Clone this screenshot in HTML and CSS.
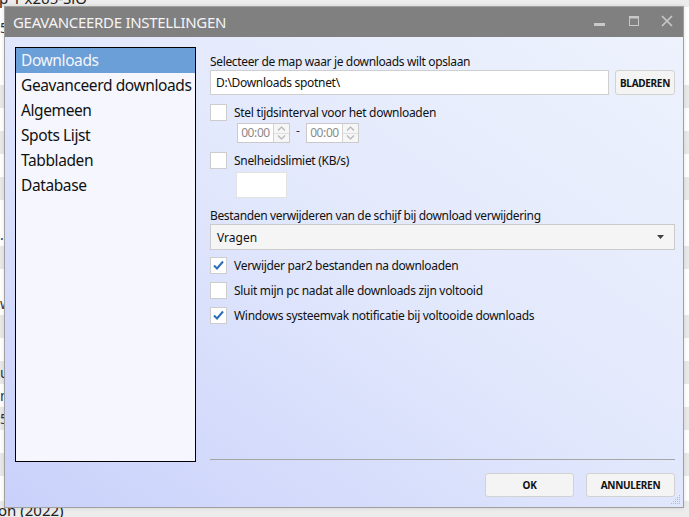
FILE: index.html
```html
<!DOCTYPE html>
<html lang="nl">
<head>
<meta charset="utf-8">
<title>Geavanceerde instellingen</title>
<link rel="stylesheet" href="styles.css">
</head>
<body>
<div class="desk">
  <div class="desk-top">p 1 x265-SiO</div>
  <div class="desk-rows">
    <div class="drow">5</div>
    <div class="drow"></div>
    <div class="drow"></div>
    <div class="drow alt"></div>
    <div class="drow"></div>
    <div class="drow alt"></div>
    <div class="drow"></div>
    <div class="drow alt"></div>
    <div class="drow"></div>
    <div class="drow">.</div>
    <div class="drow alt"></div>
    <div class="drow"></div>
    <div class="drow">w</div>
    <div class="drow alt"></div>
    <div class="drow"></div>
    <div class="drow alt">ul</div>
    <div class="drow">n</div>
    <div class="drow alt">5-</div>
    <div class="drow"></div>
    <div class="drow alt"></div>
    <div class="drow"></div>
  </div>
  <div class="desk-bottom">on (2022)</div>
</div>

<div class="dialog">
  <div class="titlebar">
    <span class="title">GEAVANCEERDE INSTELLINGEN</span>
    <div class="controls">
      <svg class="ctl ctl-min" width="11" height="11" viewBox="0 0 11 11"><rect x="0" y="6" width="11" height="3" fill="#c9c9c9"/></svg>
      <svg class="ctl ctl-max" width="10" height="10" viewBox="0 0 10 10"><rect x="0.5" y="0.5" width="9" height="9" fill="none" stroke="#c9c9c9" stroke-width="1"/><rect x="0" y="0" width="10" height="2.5" fill="#c9c9c9"/></svg>
      <svg class="ctl ctl-close" width="12" height="12" viewBox="0 0 12 12"><path d="M1 1 L11 11 M11 1 L1 11" stroke="#c9c9c9" stroke-width="1.6" fill="none"/></svg>
    </div>
  </div>
  <div class="content">
    <ul class="nav">
      <li class="nav-item selected">Downloads</li>
      <li class="nav-item">Geavanceerd downloads</li>
      <li class="nav-item">Algemeen</li>
      <li class="nav-item">Spots Lijst</li>
      <li class="nav-item">Tabbladen</li>
      <li class="nav-item">Database</li>
    </ul>
    <div class="panel">
      <div class="label first">Selecteer de map waar je downloads wilt opslaan</div>
      <div class="path-row">
        <div class="textbox">D:\Downloads spotnet\</div>
        <button class="btn btn-browse">BLADEREN</button>
      </div>

      <div class="check-row gap-top">
        <span class="cb"></span>
        <span class="cb-label">Stel tijdsinterval voor het downloaden</span>
      </div>
      <div class="time-row">
        <div class="spin">
          <span class="spin-text">00:00</span>
          <span class="spin-btns">
            <span class="spin-half"><svg width="9" height="5" viewBox="0 0 9 5"><path d="M1 4.5 L4.5 1 L8 4.5" stroke="#b5b5b5" stroke-width="1.2" fill="none"/></svg></span>
            <span class="spin-half"><svg width="9" height="5" viewBox="0 0 9 5"><path d="M1 0.5 L4.5 4 L8 0.5" stroke="#b5b5b5" stroke-width="1.2" fill="none"/></svg></span>
          </span>
        </div>
        <span class="dash">-</span>
        <div class="spin">
          <span class="spin-text">00:00</span>
          <span class="spin-btns">
            <span class="spin-half"><svg width="9" height="5" viewBox="0 0 9 5"><path d="M1 4.5 L4.5 1 L8 4.5" stroke="#b5b5b5" stroke-width="1.2" fill="none"/></svg></span>
            <span class="spin-half"><svg width="9" height="5" viewBox="0 0 9 5"><path d="M1 0.5 L4.5 4 L8 0.5" stroke="#b5b5b5" stroke-width="1.2" fill="none"/></svg></span>
          </span>
        </div>
      </div>

      <div class="check-row gap-top">
        <span class="cb"></span>
        <span class="cb-label">Snelheidslimiet (KB/s)</span>
      </div>
      <div class="speed-box"></div>

      <div class="label second">Bestanden verwijderen van de schijf bij download verwijdering</div>
      <div class="select">
        <span>Vragen</span>
        <svg width="7" height="4" viewBox="0 0 7 4"><path d="M0 0 L7 0 L3.5 4 Z" fill="#404040"/></svg>
      </div>

      <div class="checks">
        <div class="check-row">
          <span class="cb checked"><svg width="15" height="15" viewBox="0 0 15 15"><path d="M3 7.5 L6 10.5 L12 3.5" stroke="#2d6db5" stroke-width="2" fill="none"/></svg></span>
          <span class="cb-label">Verwijder par2 bestanden na downloaden</span>
        </div>
        <div class="check-row">
          <span class="cb"></span>
          <span class="cb-label">Sluit mijn pc nadat alle downloads zijn voltooid</span>
        </div>
        <div class="check-row">
          <span class="cb checked"><svg width="15" height="15" viewBox="0 0 15 15"><path d="M3 7.5 L6 10.5 L12 3.5" stroke="#2d6db5" stroke-width="2" fill="none"/></svg></span>
          <span class="cb-label">Windows systeemvak notificatie bij voltooide downloads</span>
        </div>
      </div>

      <div class="spacer"></div>
      <div class="sep"></div>
      <div class="buttons">
        <button class="btn btn-main">OK</button>
        <button class="btn btn-main">ANNULEREN</button>
      </div>
    </div>
  </div>
  <svg class="grip" width="10" height="10" viewBox="0 0 10 10">
    <g fill="#b8b8c8">
      <rect x="8" y="0" width="1" height="1"/>
      <rect x="6" y="2" width="1" height="1"/><rect x="8" y="2" width="1" height="1"/>
      <rect x="4" y="4" width="1" height="1"/><rect x="6" y="4" width="1" height="1"/><rect x="8" y="4" width="1" height="1"/>
      <rect x="2" y="6" width="1" height="1"/><rect x="4" y="6" width="1" height="1"/><rect x="6" y="6" width="1" height="1"/><rect x="8" y="6" width="1" height="1"/>
      <rect x="0" y="8" width="1" height="1"/><rect x="2" y="8" width="1" height="1"/><rect x="4" y="8" width="1" height="1"/><rect x="6" y="8" width="1" height="1"/><rect x="8" y="8" width="1" height="1"/>
    </g>
  </svg>
</div>
</body>
</html>
```

FILE: styles.css
```css
* { box-sizing: border-box; }

html, body {
  margin: 0;
  padding: 0;
  width: 689px;
  height: 517px;
  overflow: hidden;
}

body {
  background: #f0f0f0;
  font-family: "Noto Sans", "Open Sans", sans-serif;
  color: #111;
  position: relative;
}

/* backdrop window fragments */
.desk {
  position: absolute;
  inset: 0;
  background: #ffffff;
}

.desk-top {
  position: absolute;
  left: 0;
  top: -11px;
  font-size: 15px;
  line-height: 18px;
  color: #222;
  background: #ececec;
  width: 689px;
  text-indent: -1px;
}

.desk-rows {
  position: absolute;
  left: 0;
  top: 16px;
  width: 689px;
}

.drow {
  height: 23px;
  font-size: 14px;
  line-height: 23px;
  color: #333;
  background: #ffffff;
}

.drow.alt { background: #e9e9e9; }

.desk-bottom {
  position: absolute;
  left: 0;
  top: 501px;
  width: 689px;
  height: 16px;
  font-size: 15px;
  line-height: 18px;
  color: #222;
  background: #ececec;
  text-indent: -2px;
}

/* dialog */
.dialog {
  position: absolute;
  left: 4px;
  top: 6px;
  width: 680px;
  height: 502px;
  border: 1px solid #a0a0a0;
  display: flex;
  flex-direction: column;
  box-shadow: 0 0 4px rgba(0,0,0,0.12);
}

.titlebar {
  height: 30px;
  background: #808080;
  display: flex;
  align-items: center;
  padding-left: 8px;
  padding-right: 10px;
  flex: none;
}

.title {
  color: #f4f4f4;
  font-size: 15px;
  letter-spacing: -0.3px;
}

.controls {
  margin-left: auto;
  display: flex;
  align-items: center;
}

.ctl { display: block; }
.ctl-min { margin-right: 24px; }
.ctl-max { margin-right: 22px; margin-top: -2px; }
.ctl-close { margin-top: -2px; }

.content {
  flex: 1;
  display: grid;
  grid-template-columns: 181px 1fr;
  column-gap: 14px;
  align-items: start;
  padding: 10px 8px 10px 10px;
  background: linear-gradient(to bottom left, #edf2fd 0%, #e3e9fc 45%, #c9d1fb 100%);
}

.nav {
  list-style: none;
  margin: 0;
  padding: 0;
  height: 415px;
  border: 1px solid #000;
  background: #f6f7fe;
}

.nav-item {
  height: 25px;
  line-height: 25px;
  font-size: 15.5px;
  padding-left: 5px;
  color: #111;
  white-space: nowrap;
  letter-spacing: -0.4px;
}

.nav-item.selected {
  background: #6a9fd8;
  color: #f4f6fa;
}

.panel {
  height: 450px;
  display: flex;
  flex-direction: column;
  font-size: 12px;
}

.label {
  line-height: 16px;
  white-space: nowrap;
  letter-spacing: -0.35px;
}
.label.first { margin-top: 7px; }
.label.second { margin-top: 10px; }

.path-row {
  display: flex;
  gap: 6px;
  height: 25px;
}

.textbox {
  flex: 1;
  background: #fff;
  border: 1px solid #cfcfcf;
  line-height: 23px;
  padding-left: 5px;
  font-size: 12px;
  letter-spacing: -0.3px;
}

.btn {
  font-family: "Noto Sans", "Open Sans", sans-serif;
  font-weight: 700;
  font-size: 10px;
  color: #111;
  background: #f4f4f4;
  border: 1px solid #d2d2d2;
  border-radius: 3px;
  padding: 0;
  letter-spacing: -0.3px;
}

.btn-browse { width: 60px; }

.check-row {
  display: flex;
  align-items: center;
  height: 17px;
  white-space: nowrap;
}
.check-row.gap-top { margin-top: 9px; }

.cb {
  width: 17px;
  height: 17px;
  flex: none;
  background: #fff;
  border: 1px solid #cdcdcd;
  display: flex;
  align-items: center;
  justify-content: center;
}

.cb-label {
  margin-left: 7px;
  letter-spacing: -0.3px;
}

.time-row {
  display: flex;
  align-items: center;
  margin-top: 2px;
  margin-left: 27px;
  height: 20px;
}

.spin {
  display: flex;
  width: 53px;
  height: 20px;
  border: 1px solid #cacaca;
  background: #fff;
}

.spin-text {
  width: 35px;
  line-height: 18px;
  color: #8a8a8a;
  font-size: 12px;
  text-align: center;
  letter-spacing: -0.4px;
}

.spin-btns {
  flex: 1;
  display: flex;
  flex-direction: column;
  border-left: 1px solid #d4d4d4;
}

.spin-half {
  flex: 1;
  display: flex;
  align-items: center;
  justify-content: center;
  background: #f6f6f6;
}
.spin-half + .spin-half { border-top: 1px solid #e0e0e0; }

.dash {
  width: 16px;
  text-align: center;
  color: #333;
  margin-top: -5px;
}

.speed-box {
  margin-top: 3px;
  margin-left: 26px;
  width: 51px;
  height: 26px;
  background: #fff;
  border: 1px solid #e2e2e2;
}

.select {
  height: 26px;
  background: #f5f5f5;
  border: 1px solid #cbcbcb;
  display: flex;
  align-items: center;
  justify-content: space-between;
  padding: 0 10px 0 6px;
  font-size: 12px;
}

.checks {
  margin-top: 7px;
  display: flex;
  flex-direction: column;
  gap: 8px;
}

.spacer { flex: 1; }

.sep {
  height: 1px;
  background: #a6a6a6;
  flex: none;
}

.buttons {
  margin-top: 13px;
  display: flex;
  justify-content: flex-end;
  gap: 12px;
  flex: none;
}

.btn-main {
  width: 89px;
  height: 24px;
}

.grip {
  position: absolute;
  right: 2px;
  bottom: 2px;
}
```
